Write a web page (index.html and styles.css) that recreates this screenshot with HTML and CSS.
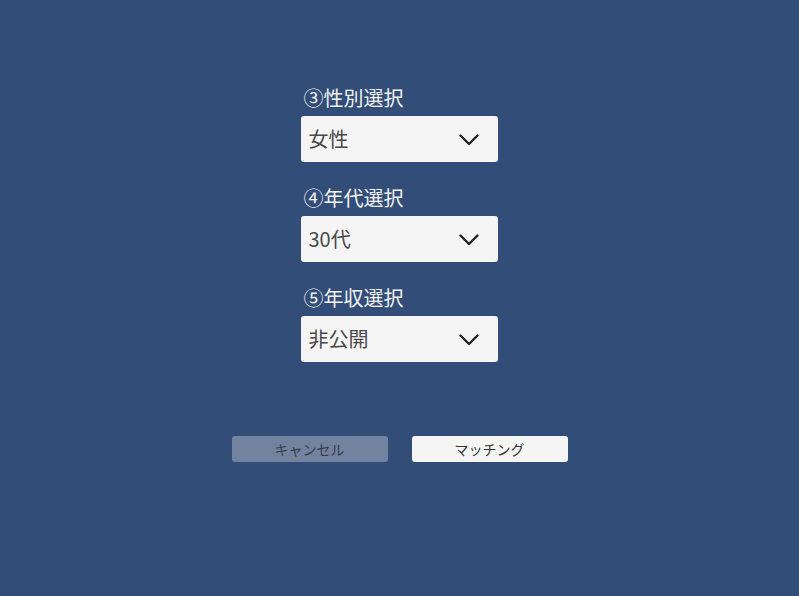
FILE: index.html
```html
<!DOCTYPE html>
<html lang="ja">
<head>
<meta charset="utf-8">
<title>選択</title>
<link rel="stylesheet" href="styles.css">
</head>
<body>
<main class="page">
  <section class="fields">
    <div class="field">
      <div class="label">③性別選択</div>
      <div class="select"><span class="value">女性</span><svg class="chev" viewBox="0 0 20 12" width="20" height="12"><path d="M1.5 1.5 L10 10 L18.5 1.5" fill="none" stroke="#222" stroke-width="2.4" stroke-linecap="round" stroke-linejoin="round"/></svg></div>
    </div>
    <div class="field">
      <div class="label">④年代選択</div>
      <div class="select"><span class="value">30代</span><svg class="chev" viewBox="0 0 20 12" width="20" height="12"><path d="M1.5 1.5 L10 10 L18.5 1.5" fill="none" stroke="#222" stroke-width="2.4" stroke-linecap="round" stroke-linejoin="round"/></svg></div>
    </div>
    <div class="field">
      <div class="label">⑤年収選択</div>
      <div class="select"><span class="value">非公開</span><svg class="chev" viewBox="0 0 20 12" width="20" height="12"><path d="M1.5 1.5 L10 10 L18.5 1.5" fill="none" stroke="#222" stroke-width="2.4" stroke-linecap="round" stroke-linejoin="round"/></svg></div>
    </div>
  </section>
  <section class="actions">
    <div class="btn btn-cancel">キャンセル</div>
    <div class="btn btn-ok">マッチング</div>
  </section>
</main>
</body>
</html>
```

FILE: styles.css
```css
html, body {
  margin: 0;
  padding: 0;
}
body {
  background: #324e78;
  width: 799px;
  height: 596px;
  overflow: hidden;
  font-family: "Noto Sans CJK JP", "Noto Sans", sans-serif;
}
.page {
  display: flex;
  flex-direction: column;
  align-items: center;
  padding-top: 85px;
}
.fields {
  display: flex;
  flex-direction: column;
  gap: 23px;
  width: 197px;
  margin-left: -1px;
}
.field {
  display: flex;
  flex-direction: column;
  gap: 5px;
}
.label {
  color: #f2f2f2;
  font-size: 20px;
  line-height: 26px;
  height: 26px;
  padding-left: 3px;
}
.select {
  height: 46px;
  background: #f5f5f5;
  border-radius: 3px;
  display: flex;
  align-items: center;
  justify-content: space-between;
  padding: 0 19px 0 8px;
  box-sizing: border-box;
}
.value {
  color: #484848;
  font-size: 20px;
  line-height: 46px;
}
.chev {
  display: block;
  margin-top: 1px;
}
.actions {
  display: flex;
  gap: 24px;
  margin-top: 74px;
}
.btn {
  width: 156px;
  height: 26px;
  border-radius: 3px;
  display: flex;
  align-items: center;
  justify-content: center;
  font-size: 14px;
  box-sizing: border-box;
}
.btn-cancel {
  background: #72829f;
  color: #363d4c;
}
.btn-ok {
  background: #f5f5f5;
  color: #333;
}
```
